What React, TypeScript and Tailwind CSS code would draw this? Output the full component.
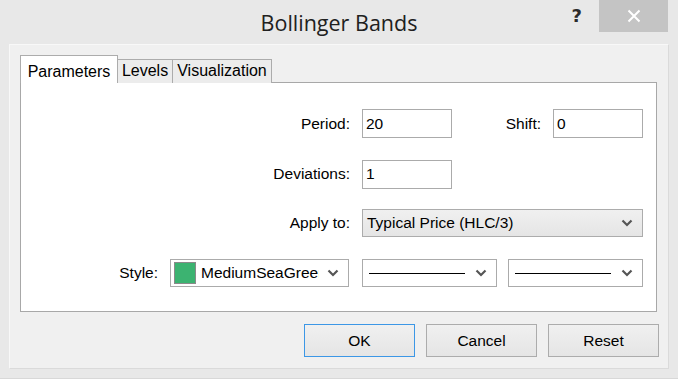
import React from "react";

const Chevron = () => (
  <svg width="12" height="8" viewBox="0 0 12 8" className="shrink-0">
    <path d="M1.5 1.5 L6 6 L10.5 1.5" fill="none" stroke="#555555" strokeWidth="2.2" />
  </svg>
);

const TextBox = ({ value }: { value: string }) => (
  <div className="flex h-[29px] w-[90px] items-center border border-[#ababab] bg-white px-[3px] text-[15.5px] text-black">
    {value}
  </div>
);

const LineSelect = () => (
  <div className="flex h-[28px] w-[135px] items-center border border-[#ababab] bg-white pl-[6px] pr-[9px]">
    <div className="h-px w-[96px] bg-black" />
    <div className="flex-1" />
    <Chevron />
  </div>
);

const DialogButton = ({ label, focused }: { label: string; focused?: boolean }) => (
  <button
    type="button"
    className={`h-[33px] w-[111px] bg-gradient-to-b from-[#f0f0f0] to-[#e5e5e5] text-[15.5px] text-black ${
      focused ? "border border-[#3c97e6]" : "border border-[#acacac]"
    }`}
  >
    {label}
  </button>
);

export default function App() {
  return (
    <div className="flex h-[379px] w-[678px] flex-col border-b border-[#d8d8d8] bg-[#e8e8e8] font-['Liberation_Sans',Arial,sans-serif] text-black">
      {/* title bar */}
      <div className="grid h-[44px] grid-cols-[1fr_auto_1fr]">
        <div />
        <div className="pt-[7px] font-['Open_Sans',sans-serif] text-[21.5px] text-[#202020]">Bollinger Bands</div>
        <div className="flex items-start justify-end pr-[10px]">
          <span className="mr-[17px] pt-[5px] font-['DejaVu_Sans',sans-serif] text-[18px] font-bold leading-[22px] text-[#2b2b2b]">?</span>
          <div className="flex h-[32px] w-[69px] items-center justify-center bg-[#c4c4c4]">
            <svg width="14" height="14" viewBox="0 0 14 14">
              <path d="M1.5 1.5 L12.5 12.5 M12.5 1.5 L1.5 12.5" stroke="#ffffff" strokeWidth="2" />
            </svg>
          </div>
        </div>
      </div>

      {/* client panel */}
      <div className="mx-[9px] flex h-[325px] flex-col border border-t-[#f8f8f8] border-l-[#f8f8f8] border-r-[#dadada] border-b-[#dadada] bg-[#f0f0f0] pl-[10px] pr-[10px] pt-[10px]">
        {/* tabs */}
        <div className="relative z-10 -mb-px flex h-[28px] items-end">
          <div className="flex h-[28px] w-[98px] items-start justify-center border border-b-0 border-[#acacac] bg-white pt-[4px] text-[16px]">
            Parameters
          </div>
          <div className="flex h-[24px] w-[55px] items-center justify-center border border-l-0 border-b-0 border-[#acacac] bg-[#ececec] pb-[1px] text-[16px]">
            Levels
          </div>
          <div className="flex h-[24px] w-[99px] items-center justify-center border border-l-0 border-b-0 border-[#acacac] bg-[#ececec] pb-[1px] text-[16px]">
            Visualization
          </div>
        </div>

        {/* tab page */}
        <div className="flex h-[230px] w-[637px] flex-col border border-[#a8a8a8] bg-white pt-[26px] text-[15.5px]">
          <div className="flex h-[29px] items-center">
            <div className="w-[329px] text-right">Period:</div>
            <div className="ml-[12px]">
              <TextBox value="20" />
            </div>
            <div className="w-[89px] text-right">Shift:</div>
            <div className="ml-[12px]">
              <TextBox value="0" />
            </div>
          </div>

          <div className="mt-[21px] flex h-[30px] items-center">
            <div className="w-[329px] text-right">Deviations:</div>
            <div className="ml-[12px]">
              <TextBox value="1" />
            </div>
          </div>

          <div className="mt-[20px] flex h-[28px] items-center">
            <div className="w-[329px] text-right">Apply to:</div>
            <div className="ml-[12px] flex h-[28px] w-[281px] items-center border border-[#acacac] bg-gradient-to-b from-[#f0f0f0] to-[#e5e5e5] pl-[4px] pr-[9px]">
              <span className="flex-1">Typical Price (HLC/3)</span>
              <Chevron />
            </div>
          </div>

          <div className="mt-[22px] flex h-[28px] items-center">
            <div className="w-[137px] text-right">Style:</div>
            <div className="ml-[12px] flex h-[28px] w-[179px] items-center border border-[#ababab] bg-white pl-[3px] pr-[9px]">
              <div className="h-[22px] w-[22px] shrink-0 border border-[#8a8a8a] bg-[#3cb371]" />
              <span className="ml-[5px] w-[118px] overflow-hidden whitespace-nowrap">MediumSeaGreen</span>
              <div className="flex-1" />
              <Chevron />
            </div>
            <div className="ml-[13px]">
              <LineSelect />
            </div>
            <div className="ml-[11px]">
              <LineSelect />
            </div>
          </div>
        </div>

        {/* buttons */}
        <div className="-mr-[1px] mt-[12px] flex justify-end gap-[11px]">
          <DialogButton label="OK" focused />
          <DialogButton label="Cancel" />
          <DialogButton label="Reset" />
        </div>
      </div>
    </div>
  );
}
